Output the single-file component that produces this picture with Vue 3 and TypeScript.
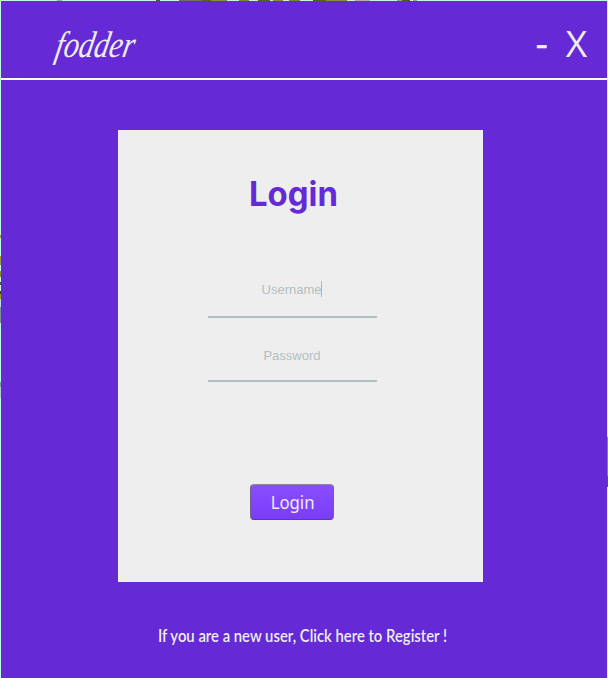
<script setup lang="ts">
import { onMounted, ref } from 'vue'

const username = ref<string>('')
const password = ref<string>('')
const ready = ref<boolean>(false)

onMounted(() => {
  ready.value = true
})
</script>

<template>
  <div class="desktop">
    <main class="window">
      <header class="bar">
        <svg class="brand" width="130" height="54" viewBox="0 0 130 54">
          <text x="18" y="37" transform="skewX(-11)" textLength="79" lengthAdjust="spacingAndGlyphs">fodder</text>
        </svg>
        <div class="controls">
          <span class="minimize">-</span>
          <span class="close">X</span>
        </div>
      </header>
      <form class="card" @submit.prevent>
        <h1 class="title">
          <svg width="100" height="46" viewBox="0 0 100 46">
            <text x="5" y="34" textLength="89" lengthAdjust="spacingAndGlyphs">Login</text>
          </svg>
        </h1>
        <label class="field">
          <span v-if="!username" class="hint">Username<i v-if="ready" class="caret"></i></span>
        </label>
        <label class="field second">
          <span v-if="!password" class="hint">Password</span>
        </label>
        <button class="submit" type="submit"><span>Login</span></button>
      </form>
      <p class="register">
        <svg width="430" height="34" viewBox="0 0 430 34">
          <text x="69" y="22" textLength="289" lengthAdjust="spacingAndGlyphs">If you are a new user, Click here to Register !</text>
        </svg>
      </p>
    </main>
  </div>
</template>

<style>
body {
  margin: 0;
  overflow: hidden;
}
</style>

<style scoped>
.desktop {
  box-sizing: border-box;
  width: 608px;
  height: 678px;
  padding: 1px 1px 0;
  background:
    linear-gradient(90deg, transparent 57px, #8fb0a8 57px 62px, transparent 62px 156px, #4b5a22 156px 160px, transparent 160px 179px, #73705f 179px 202px, #4d6b12 202px 211px, #81913c 211px 227px, transparent 227px 239px, #718f27 239px 249px, transparent 249px 258px, #4d6b12 258px 270px, transparent 270px 273px, #819434 273px 283px, transparent 283px 289px, #718f27 289px 300px, transparent 300px 313px, #4d6b12 313px 326px, #819434 326px 347px, transparent 347px 355px, #b9aaa8 355px 370px, transparent 370px 397px, #8f9d94 397px 402px, #416118 402px 410px, transparent 410px 413px, #a29aa8 413px 417px, transparent 417px) 0 0 / 608px 1px no-repeat,
    linear-gradient(transparent 235px, #9b9d37 235px 238px, transparent 238px 256px, #999a43 256px 265px, transparent 265px 271px, #858e20 271px 277px, transparent 277px 282px, #4c5530 282px 285px, transparent 285px 291px, #3f4423 291px 294px, #9a9e12 294px 299px, #b9dce0 299px 307px, #6f969d 307px 311px, #7e9293 318px 323px, transparent 323px 382px, #7b9da6 382px 387px, #b0cdcb 387px 398px, transparent 398px) 0 0 / 1px 678px no-repeat,
    linear-gradient(#d5edf7 437px, #718b9f 437px 476px, #46586d 476px 487px, #e4eef7 487px) 607px 0 / 1px 678px no-repeat,
    #c4f5e2;
}

.window {
  display: flex;
  flex-direction: column;
  align-items: center;
  height: 677px;
  background: #652ad6;
  color: #eee;
}

.bar {
  box-sizing: border-box;
  display: flex;
  justify-content: space-between;
  align-items: flex-start;
  width: 100%;
  height: 79px;
  padding: 19px 20px 0 42px;
  border-bottom: 2px solid #fff;
}

.brand text {
  font: italic 37px "Liberation Serif", serif;
  fill: #eee;
}

.controls {
  display: flex;
  gap: 18px;
  padding-top: 3px;
  font: 37px/40px "Open Sans", sans-serif;
}

.minimize {
  -webkit-text-stroke: 0.6px #eee;
}

.card {
  box-sizing: border-box;
  display: flex;
  flex-direction: column;
  align-items: center;
  width: 365px;
  height: 452px;
  margin: 50px 7px 0 0;
  padding: 42px 17px 0 0;
  background: #eee;
}

.title {
  height: 46px;
  margin: 0 0 0 4px;
}

.title svg,
.register svg {
  display: block;
}

.title text {
  font: bold 34px Inter, sans-serif;
  fill: #652ad6;
}

.field {
  box-sizing: border-box;
  display: flex;
  justify-content: center;
  width: 169px;
  height: 44px;
  margin-top: 56px;
  padding-top: 7px;
  border-bottom: 2px solid #b2bfc0;
}

.field.second {
  height: 43px;
  margin-top: 21px;
  padding-top: 8px;
}

.hint {
  display: flex;
  height: 16px;
  color: #b2bfc0;
  font: 13px/17px "Liberation Sans", sans-serif;
}

.caret {
  width: 1px;
  background: #a9babc;
}

.submit {
  box-sizing: border-box;
  width: 84px;
  height: 36px;
  margin-top: 102px;
  padding: 0 0 0 1px;
  border: 1px solid;
  border-color: #91869f #71638c #5b486f;
  border-radius: 4px;
  background: linear-gradient(#884eff, #7c3cf8);
  color: #eee;
  font: 18px/34px "Noto Sans", sans-serif;
}

.submit span {
  display: inline-block;
  transform: scaleX(0.93);
}

.register {
  margin: 38px 0 0;
}

.register text {
  font: 600 17px Lato, sans-serif;
  fill: #eee;
}
</style>
